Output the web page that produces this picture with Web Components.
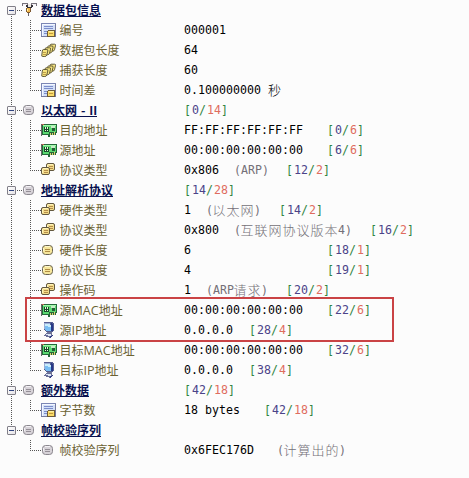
<!DOCTYPE html>
<html lang="zh-CN">
<head>
<meta charset="utf-8">
<title>数据包信息</title>
<style>
html,body{margin:0;background:#fcfcfc;height:478px;overflow:hidden}
</style>
</head>
<body>
<packet-tree>
  <tree-group label="数据包信息" icon="probe" first>
    <tree-field label="编号" icon="doc" value="000001"></tree-field>
    <tree-field label="数据包长度" icon="stack" value="64"></tree-field>
    <tree-field label="捕获长度" icon="stack" value="60"></tree-field>
    <tree-field label="时间差" icon="doc" value="0.100000000 秒" last></tree-field>
  </tree-group>
  <tree-group label="以太网 - II" icon="node" range="0/14">
    <tree-field label="目的地址" icon="card" value="FF:FF:FF:FF:FF:FF" range="0/6" at="143"></tree-field>
    <tree-field label="源地址" icon="card" value="00:00:00:00:00:00" range="6/6" at="143"></tree-field>
    <tree-field label="协议类型" icon="type" value="0x806" note="(ARP)" note-at="50" range="12/2" at="102" last></tree-field>
  </tree-group>
  <tree-group label="地址解析协议" icon="node" range="14/28">
    <tree-field label="硬件类型" icon="type" value="1" note="(以太网)" note-at="22" range="14/2" at="95"></tree-field>
    <tree-field label="协议类型" icon="type" value="0x800" note="(互联网协议版本4)" note-at="50" range="16/2" at="186"></tree-field>
    <tree-field label="硬件长度" icon="length" value="6" range="18/1" at="143"></tree-field>
    <tree-field label="协议长度" icon="length" value="4" range="19/1" at="143"></tree-field>
    <tree-field label="操作码" icon="type" value="1" note="(ARP请求)" note-at="22" range="20/2" at="102"></tree-field>
    <tree-field label="源MAC地址" icon="card" value="00:00:00:00:00:00" range="22/6" at="143"></tree-field>
    <tree-field label="源IP地址" icon="host" value="0.0.0.0" range="28/4" at="65"></tree-field>
    <tree-field label="目标MAC地址" icon="card" value="00:00:00:00:00:00" range="32/6" at="143"></tree-field>
    <tree-field label="目标IP地址" icon="host" value="0.0.0.0" range="38/4" at="65" last></tree-field>
  </tree-group>
  <tree-group label="额外数据" icon="node" range="42/18">
    <tree-field label="字节数" icon="doc" value="18 bytes" range="42/18" at="80" last></tree-field>
  </tree-group>
  <tree-group label="帧校验序列" icon="node" final>
    <tree-field label="帧校验序列" icon="node" value="0x6FEC176D" note="(计算出的)" note-at="93" last></tree-field>
  </tree-group>
</packet-tree>
<script>
const note = (x, y) => `<rect x="${x+.5}" y="${y+.5}" width="8" height="7" rx="1.5" fill="#f3dc8b" stroke="#625840"/><path d="M${x+2} ${y+1}h5v1h-5zM${x+1} ${y+2}h1v4h-1z" fill="#fff3b8"/><path d="M${x+3} ${y+3}h4v1h-4zM${x+3} ${y+5}h4v1h-4z" fill="#b58d49"/>`;
const disc = (fill, hi, edge, line) => `<rect x="1.5" y="3.5" width="10" height="9" rx="3" fill="${fill}" stroke="${edge}"/><path d="M4 4h5v1H4zM2 6h1v3H2z" fill="${hi}"/><path d="M4 7h5v1H4zM4 9h5v1H4z" fill="${line}"/>`;
const leaf = (x, y) => `<path d="M${x+2} ${y+.5}h3.5q1.5 0 1 1.5l-1 4q-.5 1.5-2 1.5h-2q-1.5 0-1-1.5l.5-4q.2-1.5 1-1.5z" fill="#f5e37d" stroke="#5b5437" stroke-width=".95"/>`;
const ICONS = {
  doc: `<path d="M0 1h15v14H0z" fill="#7b86b4"/><path d="M1 2h13v12H1z" fill="#d3dff8"/><path d="M1 2h13v1H1zM1 2h1v12H1z" fill="#f3f7ff"/><path d="M14 2h1v13H0v-1h14z" fill="#74799d"/><path d="M3 4h9v1H3zM3 6h9v1H3zM3 9h4v1H3zM3 11h3v1H3z" fill="#7b8dca"/><path d="M8 8h5l1 1v5l-1 1H6V9z" fill="#6d5b39"/><path d="M7 9h6v5H7z" fill="#fadb68"/><path d="M8 9h5v1H8z" fill="#fff0a0"/><path d="M8 11h4v1H8z" fill="#c29b40"/>`,
  stack: leaf(8,1.7)+leaf(5.5,3.5)+leaf(3,5.3)+leaf(.3,7)+`<path d="M2 10h3v1H2zM2 12h3v1H2z" fill="#bc9c4a"/>`,
  card: `<path d="M0 2h1v12H0z" fill="#666"/><path d="M1 2h15v9h-1v2H9v2H7v-2H1z" fill="#24693a"/><path d="M2 3h13v7H8v2H2z" fill="#5bd971"/><path d="M2 3h13v1H2z" fill="#a3f9ad"/><path d="M3 5h5v5H3z" fill="#164b2b"/><path d="M4 5h1v2H4zM6 5h1v2H6zM4 8h1v1H4zM6 8h1v1H6z" fill="#e4f8d5"/><path d="M10 4h4v2h-4z" fill="#c9ebc8"/><path d="M11 6h3v3h-3z" fill="#235c36"/><path d="M9 11h1v2H9zM11 11h1v2h-1zM13 10h1v3h-1z" fill="#e0ca70"/><path d="M1 2h2v1H1z" fill="#c65d4d"/>`,
  type: note(5,1)+note(0,5),
  length: disc('#f6e69b','#fff8ca','#686250','#af8c44'),
  node: disc('#d7d3d8','#f3f1f5','#8a878e','#958f97'),
  host: `<path d="M3 0h7l3 1v8l-2 1H5L3 8z" fill="#545d91"/><path d="M3 1h6l1 8H5L3 7z" fill="#78bdf3"/><path d="M4 1h5l1 4-6-1z" fill="#c7ecfc"/><path d="M3 1h1v6H3zM4 1h5v1H4z" fill="#9baed5"/><path d="M10 1l2 1v7h-2z" fill="#263887"/><path d="M6 10h5v2H5z" fill="#727796"/><path d="M5 11h4l3 2v1l-3 2-6-2z" fill="#686e98"/><path d="M5 12h4l2 1-2 1-5-1z" fill="#dde5f5"/><path d="M9 14l3-1v1l-3 2z" fill="#303c86"/>`,
  probe: `<path d="M0 1h6v3H5V3H1v1H0zM9 1h6v3h-1V3h-4v1H9z" fill="#77737b"/><path d="M1 2h4v1H1zM10 2h4v1h-4z" fill="#f2eff5"/><path d="M4 3h2v2h3V3h2v2l-2 1H6L4 5z" fill="#343138"/><path d="M6 2h3v3H6z" fill="#eee9e5"/><path d="M4 6h5v4H8v1H5v-1H4z" fill="#7e5930"/><path d="M5 6h3v4H5z" fill="#efb64a"/><path d="M5 7h1v2H5z" fill="#fff2ac"/><path d="M6 11h1v3H6z" fill="#656169"/>`
};
class TreeIcon extends HTMLElement {
  connectedCallback() {
    const name = this.getAttribute('name');
    const mode = ['stack','type','length','node'].includes(name) ? 'auto' : 'crispEdges';
    this.attachShadow({mode:'open'}).innerHTML = `<style>:host{display:block;width:16px;height:16px;flex:none}svg{display:block;shape-rendering:${mode}}</style><svg width="16" height="16" viewBox="0 0 16 16">${ICONS[name]}</svg>`;
  }
}
class ByteRange extends HTMLElement {
  connectedCallback() {
    const [a, b] = this.getAttribute('value').split('/');
    this.attachShadow({mode:'open'}).innerHTML = `<style>:host{display:flex;color:#2f8540;white-space:pre}.o{color:#4b4388;margin-left:1px}.s{color:#2f8540}.l{color:#df6c5e;margin-left:1px}</style><span>[</span><span class="o">${a}</span><span class="s">/</span><span class="l">${b}</span><span>]</span>`;
  }
}
const mono = `font:11.6px/20px "DejaVu Sans Mono","Noto Sans CJK SC",monospace;letter-spacing:.016px`;
class TreeField extends HTMLElement {
  connectedCallback() {
    const g = n => this.getAttribute(n);
    const noteAt = +(g('note-at') || 0), at = +(g('at') || 0), note = g('note');
    const first = note ? noteAt : at;
    const value = g('value').replace('秒', '<i>秒</i>');
    const noteHtml = note ? note.replace(/[\u4e00-\u9fff]+/g, t => `<i>${t}</i>`) : '';
    const label = g('label').replace(/[A-Z]+/g, t => `<span class="lat">${t}</span>`);
    this.attachShadow({mode:'open'}).innerHTML = `<style>
      :host{display:flex;height:20px;padding-left:30px;white-space:pre}
      .line{width:11px;height:20px;flex:none;background:
        repeating-linear-gradient(90deg,#555 0 1px,transparent 1px 2px) 0 10px/11px 1px no-repeat,
        repeating-linear-gradient(180deg,#555 0 1px,transparent 1px 2px) 0 0/1px 20px no-repeat}
      :host([last]) .line{background-size:11px 1px,1px 11px}
      tree-icon{margin-top:2px}
      .label{width:124.5px;margin-left:2.5px;flex:none;font:12px/19px "Noto Sans CJK SC",sans-serif;color:#6b6233}
      .lat{font-family:"Open Sans",sans-serif;font-size:12.6px}
      .data{display:flex;${mono};color:#000}
      .value{flex:none}.note{flex:none;color:#747078}
      i{font:300 13px/1 "Noto Sans CJK SC",sans-serif;letter-spacing:1px;vertical-align:-.5px}
      .note i{margin-left:-.5px;margin-right:-.5px}
    </style><div class="line"></div><tree-icon name="${g('icon')}"></tree-icon><div class="label">${label}</div>
    <div class="data"><span class="value" style="width:${first ? first + 'px' : 'auto'}">${value}</span>${note ? `<span class="note" style="width:${at ? at-noteAt + 'px' : 'auto'}">${noteHtml}</span>` : ''}${g('range') ? `<byte-range value="${g('range')}"></byte-range>` : ''}</div>`;
  }
}
class TreeGroup extends HTMLElement {
  connectedCallback() {
    const g = n => this.getAttribute(n);
    const wide = g('label').includes(' ') ? '1.2px' : '0';
    this.attachShadow({mode:'open'}).innerHTML = `<style>
      :host{display:block;background:repeating-linear-gradient(180deg,#555 0 1px,transparent 1px 2px) 11px 0/1px 100% no-repeat}
      :host([first]){background-position:11px 10px}
      :host([final]){background-size:1px 10px}
      header{display:flex;height:20px;padding-left:7px}
      .toggle{width:7px;height:7px;margin-top:6px;border:1px solid #817f88;border-radius:1px;background:linear-gradient(#30437e,#30437e) 1px 3px/5px 1px no-repeat,linear-gradient(135deg,#fff,#e5e2e5)}
      .dots{width:6px;height:1px;margin-top:10px;background:repeating-linear-gradient(90deg,transparent 0 1px,#555 1px 2px)}
      tree-icon{margin-top:2px}
      .title{width:143px;margin-left:3px;font:bold 12px/19px "Noto Sans CJK SC",sans-serif;color:#07104f;white-space:pre;word-spacing:${wide}}
      .title span{display:inline-block;height:16px;border-bottom:1px solid #07104f}
      byte-range{${mono}}
    </style><header><div class="toggle"></div><div class="dots"></div><tree-icon name="${g('icon')}"></tree-icon><div class="title"><span>${g('label')}</span></div>${g('range') ? `<byte-range value="${g('range')}"></byte-range>` : ''}</header><slot></slot>`;
  }
}
class PacketTree extends HTMLElement {
  connectedCallback() {
    this.attachShadow({mode:'open'}).innerHTML = `<style>
      :host{display:block;position:relative;width:469px;height:478px;background:#fcfcfc}
      .mark{position:absolute;left:25px;top:297px;width:365px;height:41px;border:2px solid #ca4345}
    </style><slot></slot><div class="mark"></div>`;
  }
}
customElements.define('tree-icon', TreeIcon);
customElements.define('byte-range', ByteRange);
customElements.define('tree-field', TreeField);
customElements.define('tree-group', TreeGroup);
customElements.define('packet-tree', PacketTree);
</script>
</body>
</html>
